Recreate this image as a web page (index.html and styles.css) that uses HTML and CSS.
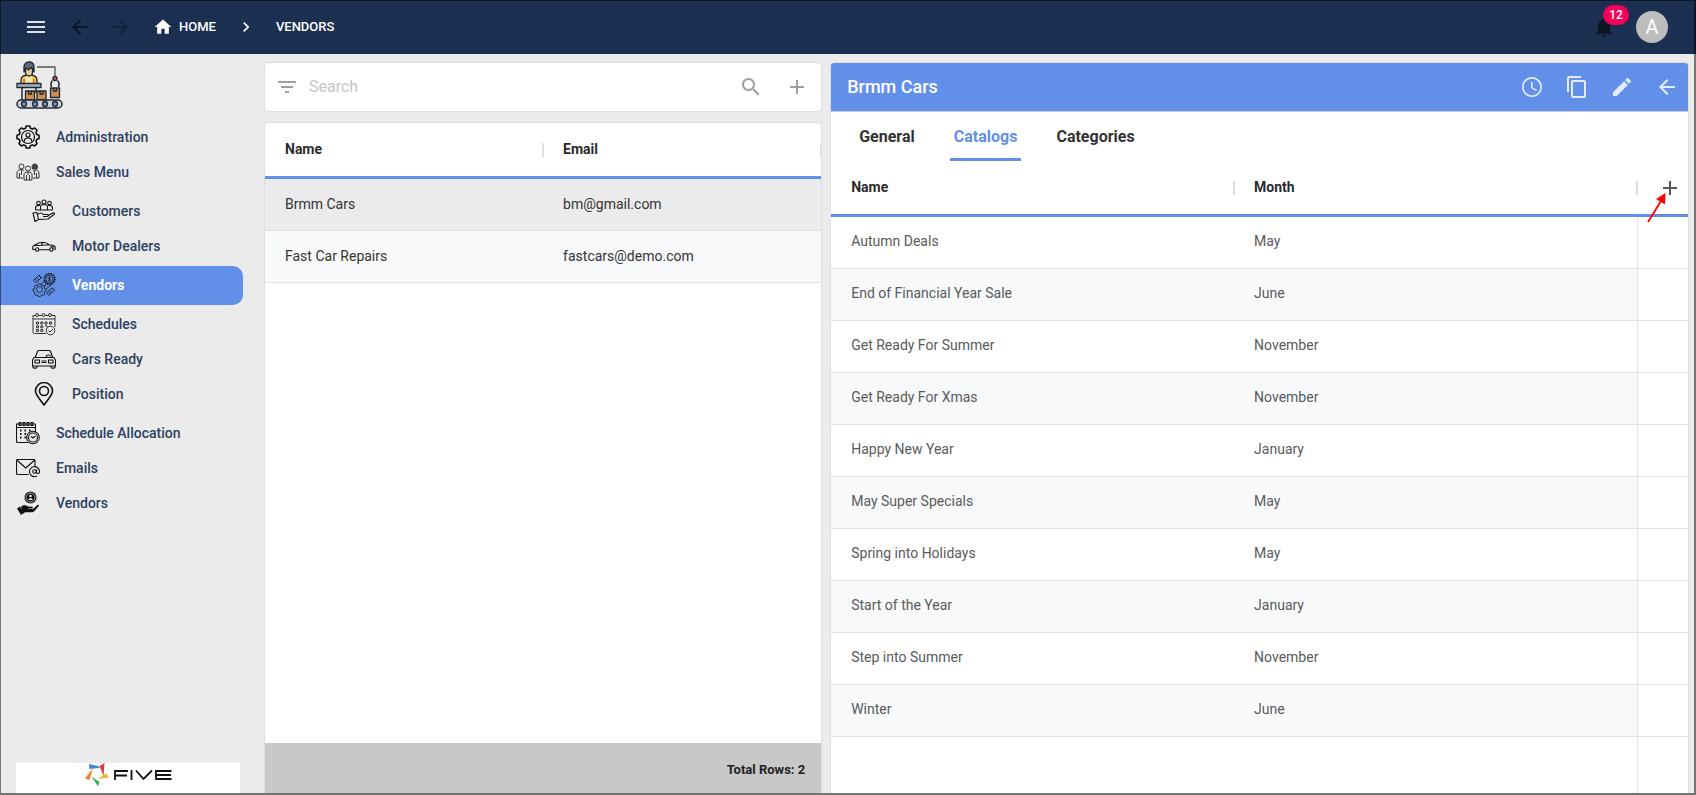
FILE: index.html
```html
<!DOCTYPE html>
<html lang="en">
<head>
    <meta charset="UTF-8">
    <meta name="viewport" content="width=device-width, initial-scale=1.0">
    <title>Vendors - Five</title>
    <link rel="stylesheet" href="styles.css">
</head>
<body>
    <header class="topbar">
        <button class="icon-btn menu-btn" aria-label="Menu">
            <svg viewBox="0 0 24 24"><path d="M3 18h18v-2H3v2zm0-5h18v-2H3v2zm0-7v2h18V6H3z"/></svg>
        </button>
        <button class="icon-btn back-btn" aria-label="Back">
            <svg viewBox="0 0 24 24"><path d="M20 11H7.830l5.590-5.590L12 4l-8 8 8 8 1.410-1.410L7.830 13H20v-2z"/></svg>
        </button>
        <button class="icon-btn forward-btn" aria-label="Forward" disabled>
            <svg viewBox="0 0 24 24"><path d="M12 4l-1.410 1.410L16.170 11H4v2h12.170l-5.580 5.590L12 20l8-8z"/></svg>
        </button>
        <nav class="breadcrumbs">
            <a href="#">
                <svg viewBox="0 0 24 24"><path d="M10 20v-6h4v6h5v-8h3L12 3 2 12h3v8z"/></svg>
                HOME
            </a>
            <svg viewBox="0 0 24 24"><path d="M10 6L8.590 7.410 13.170 12l-4.580 4.590L10 18l6-6z"/></svg>
            <a href="#">VENDORS</a>
        </nav>
        <button class="icon-btn bell" aria-label="Notifications">
            <svg viewBox="0 0 24 24"><path d="M12 22c1.100 0 2-.900 2-2h-4c0 1.100.890 2 2 2zm6-6v-5c0-3.070-1.640-5.640-4.500-6.320V4c0-.830-.670-1.500-1.500-1.500s-1.500.670-1.500 1.500v.680C7.630 5.360 6 7.920 6 11v5l-2 2v1h16v-1l-2-2z"/></svg>
            <span class="badge">12</span>
        </button>
        <button class="avatar">A</button>
    </header>

    <div class="layout">
        <aside class="sidebar">
            <svg class="app-logo" viewBox="0 0 48 48">
                <path d="M21 6h18v10" stroke="#555"/>
                <circle cx="39" cy="17.500" r="2" fill="#e8564a"/>
                <path d="M36.500 19.500c-2 2-2 4-1 6.500M41.500 19.500c2 2 2 4 1 6.500" stroke-width="1.500"/>
                <rect x="34.500" y="27" width="9" height="9.500" fill="#d08d4d"/>
                <path d="M37.500 27v3h3v-3"/>
                <path d="M5 22v-3c0-3 3-5 8-5s8 2 8 5v3" fill="#f1cf62"/>
                <path d="M10 14v8h6v-8" fill="#fae6a8" stroke="none"/>
                <path d="M8 18v4M18 18v4" stroke="#d24b45"/>
                <path d="M9.500 7h7v4c0 3-2 4-3.500 4s-3.500-1-3.500-4z" fill="#f2c9a0"/>
                <path d="M8 11V6c0-3 2-5 5-5s5 2 5 5v5l-2-4h-2l-1.500 2L10 7z" fill="#5d6b7a"/>
                <path d="M6 27v12M20 27v5" stroke-width="1.500"/>
                <rect x="1" y="22.500" width="24" height="4" fill="#a9b3c2"/>
                <rect x="9.500" y="30" width="9" height="9" fill="#d08d4d"/>
                <rect x="21" y="30" width="9" height="9" fill="#d08d4d"/>
                <path d="M12.500 30v3h3v-3M24 30v3h3v-3"/>
                <rect x="1" y="39" width="45" height="8" rx="4" fill="#cdd2da" stroke-width="1.500"/>
                <g fill="#7d93aa"><circle cx="8" cy="43" r="2.500"/><circle cx="19" cy="43" r="2.500"/><circle cx="29" cy="43" r="2.500"/><circle cx="39" cy="43" r="2.500"/></g>
            </svg>

            <nav class="menu">
                <a href="#" class="menu-item">
                    <svg viewBox="0 0 24 24" class="line thick"><path d="M10.200 1h3.600l.6 2.200 2 .8 2.300-1 2.300 2.300-1 2.300.8 2 2.200.6v3.500l-2.200.6-.8 2 1 2.300-2.300 2.300-2.300-1-2 .8-.6 2.300h-3.600l-.6-2.300-2-.8-2.300 1-2.300-2.300 1-2.300-.8-2L1 13.700v-3.500l2.200-.6.8-2-1-2.300L5.300 3l2.300 1 2-.8z"/><circle cx="12" cy="12" r="6.500" stroke-width="1.200"/><circle cx="12" cy="10" r="2" stroke-width="1.200"/><path d="M8.500 16.500v-1c0-1.500 1.500-2.500 3.500-2.500s3.500 1 3.500 2.500v1" stroke-width="1.200"/></svg>
                    Administration
                </a>
                <a href="#" class="menu-item">
                    <svg viewBox="0 0 24 24" class="line grey"><circle cx="5.500" cy="6.500" r="2.500"/><circle cx="12" cy="8.500" r="2.500"/><path d="M16.500 9c-1-3 0-5 2.200-5s3.300 2 2.300 5z" fill="#444"/><path d="M1 18v-5c0-2 1.500-3.500 4-3.500 1.500 0 2.500.500 3 1.500M1 18h6M3.500 13v5M5.500 10v5M8 20v-5c0-2 1-3 4-3s4 1 4 3v5zM10.500 15v5M13.500 15v5M12 12v3M17 11c2-1.500 6-1 6 2v5h-6M20.500 13v5M18.500 11v4"/></svg>
                    Sales Menu
                </a>
                <div class="submenu">
                    <a href="#" class="menu-item">
                        <svg viewBox="0 0 24 24" class="line"><circle cx="6.500" cy="4" r="1.800"/><circle cx="12" cy="3" r="2"/><circle cx="17.500" cy="4" r="1.800"/><path d="M3.500 11V9c0-2 1-2.500 3-2.500h1.500M20.500 11V9c0-2-1-2.500-3-2.500H16M8.500 11V8c0-2 1-2.500 3.500-2.500s3.500.500 3.500 2.500v3M3.500 11h17M1 14l4-.500 1.500 7L3 22.500zM5.500 15.500c2-2 4-2 6 0h4c1.500 0 1 2-.5 2h-4M16 16.500l5-2.500c1.500-.500 2 .500 1 1.500L16 20l-9.500.500"/></svg>
                        Customers
                    </a>
                    <a href="#" class="menu-item">
                        <svg viewBox="0 0 24 24" class="line"><path d="M3.300 15.500H.8v-3l1.700-1.200C5 9.500 7.500 8.300 11 8.300c3 0 4.700 1.200 6 2.400 3 .2 5.500 1 6.200 2.300v2.300h-2M7.200 15.700h10.200M2.500 11.500h4L17 10.700M10.500 8.500l-1 2.700M18.500 12.500l3.500.700"/><circle cx="5.200" cy="15.500" r="1.700"/><circle cx="19.300" cy="15.500" r="1.700"/></svg>
                        Motor Dealers
                    </a>
                    <a href="#" class="menu-item active">
                        <svg viewBox="0 0 24 24" class="line fine"><path d="M1.500 7.500L6.500 2.500l2.500 2.500-5 5zM3 6l2.500 2.500M4.500 4.500L7 7M7 2l3 3M9 11.500l4-4M11.500 13.500l4-3M14 16l7-6M14.500 20l5-5 2.500 2.500-5 5zM16 18.500l2.500 2.500M17.500 17l2.500 2.500M20 14.500l3 3"/><circle cx="17.500" cy="6" r="3.700"/><circle cx="17.500" cy="6" r="5.300" stroke-width="1.700" stroke-dasharray="1.500 .8"/><path d="M18.700 4.800c-.7-.8-2.400-.4-2.400.4s2.400.8 2.400 1.600-1.700 1.200-2.400.4M17.500 3.700v4.600"/><circle cx="7.500" cy="16.500" r="3"/><path d="M6.500 10.700h2l.5 1.500 1.200.5 1.300-.7 1.300 1.300-.6 1.400.5 1 1.300.4v2l-1.300.5-.5 1.200.6 1.300-1.300 1.300-1.300-.6-1.200.5-.5 1.300h-2l-.5-1.300-1.200-.5-1.300.6-1.300-1.300.6-1.300-.5-1.200-1.300-.5v-2l1.300-.4.5-1.200-.6-1.300L3.500 12l1.300.7 1.200-.5z"/></svg>
                        Vendors
                    </a>
                    <a href="#" class="menu-item">
                        <svg viewBox="0 0 24 24" class="line grey"><path d="M14 21.500H2.500c-1 0-1.500-.500-1.500-1.500V3.500h3M6 3.500h4M13 3.500h4M19 3.500h4V15M1 7h22"/><circle cx="5" cy="3" r="1.500"/><circle cx="11.500" cy="3" r="1.500"/><circle cx="18" cy="3" r="1.500"/><path d="M4.500 10h2v2h-2zM8.800 10h2v2h-2zM13 10h2v2h-2zM17.500 10h2v2h-2zM4.500 13.800h2v2h-2zM8.800 13.800h2v2h-2zM13 13.800h2v1.500M4.500 17.500h2v2h-2zM8.800 17.500h2v2h-2z"/><circle cx="18.500" cy="18.500" r="4.300"/><path d="M16.500 18.500l1.500 1.500 3-3"/></svg>
                        Schedules
                    </a>
                    <a href="#" class="menu-item">
                        <svg viewBox="0 0 24 24" class="line"><path d="M3.200 10.500L5.500 4.500c.300-.700.700-1 1.500-1h10c.800 0 1.200.300 1.500 1l2.300 6M2 10.500h20l1.500 2.500v6H.5v-6zM1 19v1.500c0 1 4 1 4 0V19M19 19v1.500c0 1 4 1 4 0V19M3 13h4.500v3H3zM16.500 13H21v3h-4.500zM9.500 14h5M9.500 15.500h5M14 10c.500-2 3.500-3 5-.5"/></svg>
                        Cars Ready
                    </a>
                    <a href="#" class="menu-item">
                        <svg viewBox="0 0 24 24" class="line thick"><path d="M12 23C8 17 3.500 13 3.500 9a8.500 8.500 0 0 1 17 0c0 4-4.500 8-8.500 14z"/><circle cx="12" cy="9" r="4.500"/></svg>
                        Position
                    </a>
                </div>
                <a href="#" class="menu-item">
                    <svg viewBox="0 0 24 24" class="line"><path d="M19 1h3c1 0 2 1 2 2v19h-4z" fill="#fff" stroke="none"/><path d="M12 21.500H1.500c-.700 0-1-.500-1-1V3h19v8M.5 6.500h19"/><path d="M3 1.500h2v3H3zM7 1.500h2v3H7zM11 1.500h2v3h-2zM15 1.500h2v3h-2z"/><path d="M4 9.500h1.500M8.500 9.500H10M13 9.500h1.500M4 13h1.500M8.500 13H10M4 16.500h1.500M8.500 16.500H10" stroke-width="1.800"/><circle cx="17" cy="16.500" r="6.300" fill="#ebebeb"/><circle cx="17" cy="16.500" r="4.500"/><path d="M15 15.500l2 1.500 2.500-2"/></svg>
                    Schedule Allocation
                </a>
                <a href="#" class="menu-item">
                    <svg viewBox="0 0 24 24" class="line"><path d="M12.500 18.500h-11c-.600 0-1-.400-1-1V4.500c0-.600.400-1 1-1h16.500c.600 0 1 .400 1 1V10M.8 4l8.900 8 9-8"/><circle cx="18.500" cy="15.500" r="1.800"/><path d="M20.500 13.500v3c0 1.500 3 1.500 3-1a5 5 0 1 0-2.500 4.500"/></svg>
                    Emails
                </a>
                <a href="#" class="menu-item">
                    <svg viewBox="0 0 24 24" class="solid"><circle cx="14.500" cy="6.500" r="6"/><circle cx="14.500" cy="6.500" r="4.500" fill="none" stroke="#ebebeb" stroke-width=".7"/><circle cx="14.500" cy="5" r="1.300" fill="#ebebeb"/><path d="M12.300 9c0-2.500 4.400-2.500 4.400 0z" fill="#ebebeb"/><path d="M5 15.500c3-2 5-1.500 7 0l4 .200c1.500.200 1 1.800 0 1.800h-4v.500h5l4.500-4c1-.700 2 0 1.300 1L18 20.500c-.500.500-1 .700-2 .700H9l-1.500 1.300zM1 17.500l3-2 4 6-3 2.500z"/></svg>
                    Vendors
                </a>
            </nav>

            <div class="brand">
                <svg viewBox="0 0 88 24" role="img" aria-label="Five">
                    <path d="M4 1l11 2.500-1 1.500-9.500 1z" fill="#3f87d6"/>
                    <path d="M14.500 3l5-3-1 13z" fill="#dc3b40"/>
                    <path d="M12.500 16L21 10.500l3 4z" fill="#f2b632"/>
                    <path d="M6.500 13.500L14.500 19l-1.500 4.500z" fill="#45ab5c"/>
                    <path d="M8 5L4.500 17 0 15.500z" fill="#f0813a"/>
                    <path d="M30 17V8h13M30 12.500h12M46.500 7v10M51 7.500l7.500 8.500L67 7.500M86.500 8H71v8h15.500M71 12h15" fill="none" stroke="#111" stroke-width="1.800"/>
                </svg>
            </div>
        </aside>

        <section class="list-pane">
            <div class="search-card">
                <button class="icon-btn" aria-label="Filter">
                    <svg viewBox="0 0 24 24"><path d="M10 18h4v-2h-4v2zM3 6v2h18V6H3zm3 7h12v-2H6v2z"/></svg>
                </button>
                <input type="text" placeholder="Search" aria-label="Search">
                <button class="icon-btn" aria-label="Search">
                    <svg viewBox="0 0 24 24"><path d="M15.500 14h-.790l-.280-.270C15.410 12.590 16 11.110 16 9.500 16 5.910 13.090 3 9.500 3S3 5.910 3 9.500 5.910 16 9.500 16c1.610 0 3.090-.590 4.230-1.570l.270.280v.790l5 4.990L20.490 19l-4.990-5zm-6 0C7.010 14 5 11.990 5 9.500S7.010 5 9.500 5 14 7.010 14 9.500 11.990 14 9.500 14z"/></svg>
                </button>
                <button class="icon-btn" aria-label="Add vendor">
                    <svg viewBox="0 0 24 24"><path d="M19 13h-6v6h-2v-6H5v-2h6V5h2v6h6v2z"/></svg>
                </button>
            </div>

            <div class="card list-card">
                <table class="data-table">
                    <thead>
                        <tr><th>Name</th><th>Email</th></tr>
                    </thead>
                    <tbody>
                        <tr class="selected"><td>Brmm Cars</td><td>bm@gmail.com</td></tr>
                        <tr><td>Fast Car Repairs</td><td>fastcars@demo.com</td></tr>
                    </tbody>
                </table>
                <div class="total-rows">Total Rows: 2</div>
            </div>
        </section>

        <section class="card detail-pane">
            <div class="detail-header">
                <h1>Brmm Cars</h1>
                <button class="icon-btn" aria-label="History">
                    <svg viewBox="0 0 24 24"><path d="M11.990 2C6.470 2 2 6.480 2 12s4.470 10 9.990 10C17.520 22 22 17.520 22 12S17.520 2 11.990 2zM12 20.300c-4.600 0-8.300-3.700-8.300-8.300S7.400 3.700 12 3.700s8.300 3.700 8.300 8.300-3.700 8.300-8.300 8.300zM12.500 7H11v6l5.250 3.150.750-1.230-4.500-2.670z"/></svg>
                </button>
                <button class="icon-btn" aria-label="Copy">
                    <svg viewBox="0 0 24 24"><path d="M16 1H4c-1.100 0-2 .900-2 2v14h2V3h12V1zm3 4H8c-1.100 0-2 .900-2 2v14c0 1.100.900 2 2 2h11c1.100 0 2-.900 2-2V7c0-1.100-.900-2-2-2zm0 16H8V7h11v14z"/></svg>
                </button>
                <button class="icon-btn" aria-label="Edit">
                    <svg viewBox="0 0 24 24"><path d="M3 17.250V21h3.750L17.810 9.940l-3.750-3.750L3 17.250zM20.710 7.040c.390-.390.390-1.020 0-1.410l-2.340-2.340c-.390-.390-1.020-.390-1.410 0l-1.830 1.830 3.750 3.750 1.830-1.830z"/></svg>
                </button>
                <button class="icon-btn" aria-label="Back">
                    <svg viewBox="0 0 24 24"><path d="M20 11H7.830l5.590-5.590L12 4l-8 8 8 8 1.410-1.410L7.830 13H20v-2z"/></svg>
                </button>
            </div>

            <div class="tabs" role="tablist">
                <button role="tab">General</button>
                <button role="tab" aria-selected="true" class="active">Catalogs</button>
                <button role="tab">Categories</button>
            </div>

            <table class="data-table catalog-table">
                <thead>
                    <tr>
                        <th>Name</th>
                        <th>Month</th>
                        <th class="action">
                            <button class="icon-btn" aria-label="Add catalog">
                                <svg viewBox="0 0 24 24"><path d="M19 13h-6v6h-2v-6H5v-2h6V5h2v6h6v2z"/></svg>
                            </button>
                            <svg class="pointer" viewBox="0 0 20 30"><path d="M1 29L14 8" stroke="#f00" stroke-width="1.800"/><path d="M18.500 0L18 11.500 9 6z" fill="#f00"/></svg>
                        </th>
                    </tr>
                </thead>
                <tbody>
                    <tr><td>Autumn Deals</td><td>May</td><td></td></tr>
                    <tr><td>End of Financial Year Sale</td><td>June</td><td></td></tr>
                    <tr><td>Get Ready For Summer</td><td>November</td><td></td></tr>
                    <tr><td>Get Ready For Xmas</td><td>November</td><td></td></tr>
                    <tr><td>Happy New Year</td><td>January</td><td></td></tr>
                    <tr><td>May Super Specials</td><td>May</td><td></td></tr>
                    <tr><td>Spring into Holidays</td><td>May</td><td></td></tr>
                    <tr><td>Start of the Year</td><td>January</td><td></td></tr>
                    <tr><td>Step into Summer</td><td>November</td><td></td></tr>
                    <tr><td>Winter</td><td>June</td><td></td></tr>
                </tbody>
            </table>
            <div class="table-fill"></div>
        </section>
    </div>
</body>
</html>
```
FILE: styles.css
```css
* {
    box-sizing: border-box;
}
body {
    margin: 0;
    height: 100vh;
    display: flex;
    flex-direction: column;
    overflow: hidden;
    font-family: Roboto, "Liberation Sans", sans-serif;
    font-size: 14px;
    line-height: 20px;
    background-color: #ebebeb;
    color: #333;
}
/* window frame, drawn over the page edges */
body::after {
    content: "";
    position: fixed;
    inset: 0;
    border: solid rgba(0, 0, 0, 0.5);
    border-width: 1px 2px 2px 1px;
    pointer-events: none;
}
button {
    font: inherit;
    color: inherit;
    background: none;
    border: none;
    padding: 0;
    cursor: pointer;
}
a {
    color: inherit;
    text-decoration: none;
}
svg {
    display: block;
    flex: none;
    fill: currentColor;
}
.icon-btn,
.icon-btn svg {
    width: 24px;
    height: 24px;
}
.icon-btn {
    flex: none;
}

/* top bar */
.topbar {
    flex: none;
    height: 54px;
    padding: 0 28px 1px 24px;
    display: flex;
    align-items: center;
    background-color: #1b2f50;
    color: #fff;
}
.menu-btn {
    color: #dde0e5;
    margin-right: 20px;
}
.back-btn {
    color: #0c1624;
    margin-right: 16px;
}
.forward-btn {
    color: #14233b;
    margin-right: 21px;
}
.breadcrumbs {
    display: flex;
    align-items: center;
    gap: 20px;
    flex: 1;
    font-size: 13px;
    font-weight: 500;
}
.breadcrumbs a {
    display: flex;
    align-items: center;
    gap: 6px;
}
.breadcrumbs svg {
    width: 20px;
    height: 20px;
}
.bell {
    position: relative;
    color: #0c1624;
    margin-right: 20px;
}
.badge {
    position: absolute;
    left: 11px;
    top: -10px;
    min-width: 26px;
    height: 20px;
    border-radius: 10px;
    background-color: #f50057;
    color: #fff;
    font-size: 12px;
    font-weight: 500;
    text-align: center;
}
.avatar {
    width: 32px;
    height: 32px;
    border-radius: 50%;
    background-color: #bdbdbd;
    color: #fff;
    font-size: 20px;
}

.layout {
    flex: 1;
    min-height: 0;
    display: grid;
    grid-template-columns: 256px 13fr 20fr;
    grid-template-rows: minmax(0, 1fr);
    gap: 8px;
    padding: 0 7px 2px 0;
}

/* sidebar */
.sidebar {
    display: flex;
    flex-direction: column;
    padding-top: 7px;
    color: #2b3f61;
    font-weight: 500;
}
.app-logo {
    width: 48px;
    height: 48px;
    margin: 0 0 11px 16px;
    fill: none;
    stroke: #1d2733;
    stroke-width: 1.3;
    stroke-linejoin: round;
}
.menu {
    flex: 1;
}
.menu-item {
    display: flex;
    align-items: center;
    gap: 16px;
    height: 35px;
    padding: 0 0 2px 16px;
}
.menu-item svg {
    width: 24px;
    height: 24px;
    color: #111;
}
.submenu {
    padding: 4px 0;
}
.submenu .menu-item {
    padding-left: 32px;
}
.submenu .active {
    height: 39px;
    margin: 2px 13px 2px 0;
    border-radius: 0 10px 10px 0;
    background-color: #6290e8;
    color: #fff;
    font-weight: 700;
}
.line {
    fill: none;
    stroke: currentColor;
    stroke-width: 1.1;
    stroke-linejoin: round;
}
.menu-item .grey {
    color: #333;
    stroke-width: 1;
}
.thick {
    stroke-width: 1.6;
}
.fine {
    stroke-width: 0.8;
}
.brand {
    height: 30px;
    margin: 0 16px;
    padding-left: 1px;
    background-color: #fff;
}
.brand svg {
    width: 88px;
    height: 24px;
    margin: 0 auto;
}

/* cards */
.card,
.search-card {
    border: 1px solid #dfdfdf;
    border-radius: 4px;
    background-color: #fff;
    overflow: hidden;
}
.list-pane {
    display: flex;
    flex-direction: column;
    gap: 10px;
    padding-top: 8px;
    min-width: 0;
}
.search-card {
    height: 50px;
    display: flex;
    align-items: center;
    padding: 0 12px 0 10px;
    color: #9aa0a6;
}
.search-card input {
    flex: 1;
    min-width: 0;
    margin: 0 10px;
    padding: 0;
    border: none;
    outline: none;
    font: inherit;
    font-size: 16px;
    color: #333;
}
.search-card input::placeholder {
    color: #c6c6c6;
}
.search-card .icon-btn:last-child {
    margin-left: 22px;
}
.list-card {
    flex: 1;
    display: flex;
    flex-direction: column;
    border-bottom: none;
    border-radius: 4px 4px 0 0;
}
.total-rows {
    margin-top: auto;
    height: 50px;
    padding: 16px;
    text-align: right;
    font-size: 13px;
    line-height: 22px;
    font-weight: 700;
    color: #222;
    background-color: #c8c8c8;
}

/* tables */
.data-table {
    width: 100%;
    table-layout: fixed;
    border-spacing: 0;
}
.data-table th,
.data-table td {
    padding: 0 0 0 20px;
    text-align: left;
}
.data-table th {
    position: relative;
    height: 56px;
    padding-bottom: 2px;
    border-bottom: 3px solid #6290e8;
    font-weight: 700;
    color: #2b2b2b;
}
.data-table th::after {
    content: "";
    position: absolute;
    right: -1px;
    top: 20px;
    width: 2px;
    height: 14px;
    background-color: #dfdfdf;
}
.data-table td {
    height: 52px;
    padding-bottom: 1px;
    border-bottom: 1px solid #e2e2e2;
}
.data-table tr:nth-child(even) td {
    background-color: #f8f9fb;
}
.data-table .selected td {
    background-color: #ebebeb;
}

/* detail pane */
.detail-pane {
    margin-top: 8px;
    display: flex;
    flex-direction: column;
    border-bottom: none;
    border-radius: 4px 4px 0 0;
}
.detail-header {
    flex: none;
    height: 49px;
    display: flex;
    align-items: center;
    gap: 21px;
    padding: 0 9px 0 16px;
    border-bottom: 1px solid #c4c8d0;
    background-color: #6290e8;
    color: #e3ebfb;
}
.detail-header h1 {
    flex: 1;
    margin: 0;
    font-size: 18px;
    font-weight: 500;
    color: #fff;
}
.tabs {
    flex: none;
    height: 49px;
    display: flex;
    gap: 31px;
    padding-left: 24px;
    font-size: 16px;
    font-weight: 700;
}
.tabs button {
    padding: 3px 4px 0;
    border-bottom: 3px solid transparent;
}
.tabs .active {
    color: #6290e8;
    border-bottom-color: #6290e8;
    border-radius: 2px 2px 0 0;
}
.data-table.catalog-table td {
    padding-bottom: 3px;
    color: #5a5a5a;
}
.catalog-table th:last-child {
    width: 51px;
    padding: 0 0 0 21px;
}
.catalog-table th:last-child::after {
    display: none;
}
.catalog-table tr td:last-child {
    padding: 0;
    border-left: 1px solid #e2e2e2;
}
.data-table.catalog-table tr td:last-child {
    background-color: #fff;
}
.action .icon-btn {
    display: block;
    color: #555;
}
/* arrow calling out the add button */
.pointer {
    position: absolute;
    left: 10px;
    top: 32px;
    width: 20px;
    height: 30px;
    z-index: 1;
}
.table-fill {
    flex: 1;
    margin-right: 50px;
    border-right: 1px solid #e2e2e2;
}
```
